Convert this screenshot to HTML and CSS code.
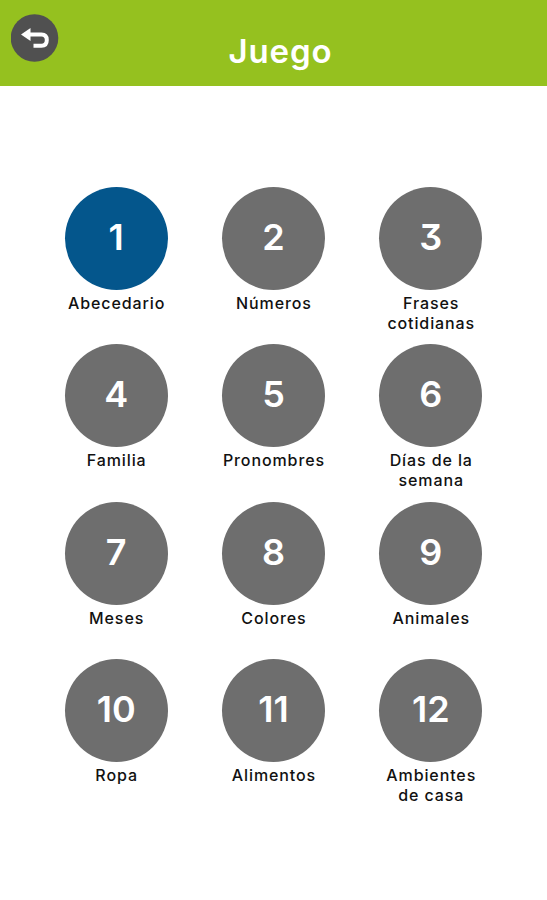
FILE: index.html
```html
<!DOCTYPE html>
<html lang="es">
<head>
<meta charset="utf-8">
<title>Juego</title>
<link rel="stylesheet" href="styles.css">
</head>
<body>
<header class="bar">
  <a class="back" href="#" aria-label="Volver">
    <svg viewBox="0 0 48 48" width="48" height="48"><circle class="face" cx="23.500" cy="24" r="23.800"/><path class="tip" d="M10 20.500L19.500 14v13z"/><path class="tail" d="M18 20.500h12.500c4 0 5.300 2.200 5.300 5.500s-1.300 5.800-5.300 5.800h-8"/></svg>
  </a>
  <h1 class="title">Juego</h1>
</header>
<main class="levels">
  <div class="level"><div class="disc active">1</div><div class="label">Abecedario</div></div>
  <div class="level"><div class="disc">2</div><div class="label">Números</div></div>
  <div class="level"><div class="disc">3</div><div class="label">Frases<br>cotidianas</div></div>
  <div class="level"><div class="disc">4</div><div class="label">Familia</div></div>
  <div class="level"><div class="disc">5</div><div class="label">Pronombres</div></div>
  <div class="level"><div class="disc">6</div><div class="label">Días de la<br>semana</div></div>
  <div class="level"><div class="disc">7</div><div class="label">Meses</div></div>
  <div class="level"><div class="disc">8</div><div class="label">Colores</div></div>
  <div class="level"><div class="disc">9</div><div class="label">Animales</div></div>
  <div class="level"><div class="disc">10</div><div class="label">Ropa</div></div>
  <div class="level"><div class="disc">11</div><div class="label">Alimentos</div></div>
  <div class="level"><div class="disc">12</div><div class="label">Ambientes<br>de casa</div></div>
</main>
</body>
</html>
```
FILE: styles.css
```css
* { box-sizing: border-box; }
body {
  margin: 0;
  height: 900px;
  overflow: hidden;
  background: #fff;
  color: #111;
  font-family: Inter, "Liberation Sans", sans-serif;
}
.bar {
  display: grid;
  grid-template-columns: 58px 1fr 44px;
  height: 86px;
  background: #95c11f;
}
.back {
  width: 48px;
  height: 48px;
  margin: 14px 0 0 11px;
}
.back svg { display: block; }
.face { fill: #505050; }
.tip { fill: #fff; }
.tail { fill: none; stroke: #fff; stroke-width: 4; }
.title {
  margin: 0;
  padding-top: 31px;
  color: #fff;
  font-size: 33px;
  line-height: 40px;
  font-weight: 600;
  letter-spacing: 0.900px;
  text-align: center;
}
.levels {
  display: grid;
  grid-template-columns: repeat(3, 157.300px);
  grid-auto-rows: 157.300px;
  justify-content: center;
  padding-top: 101px;
}
.level {
  display: flex;
  flex-direction: column;
  align-items: center;
}
.disc {
  flex: none;
  display: flex;
  align-items: center;
  justify-content: center;
  width: 103px;
  height: 103px;
  padding-bottom: 3px;
  border-radius: 50%;
  background: #6e6e6e;
  color: #fff;
  font-size: 36px;
  font-weight: 600;
  font-feature-settings: "cv09";
}
.active { background: #04568c; }
.label {
  margin-top: 3px;
  padding-left: 0.900px;
  font-size: 16px;
  line-height: 20px;
  font-weight: 500;
  letter-spacing: 0.900px;
  text-align: center;
  white-space: nowrap;
}
```
